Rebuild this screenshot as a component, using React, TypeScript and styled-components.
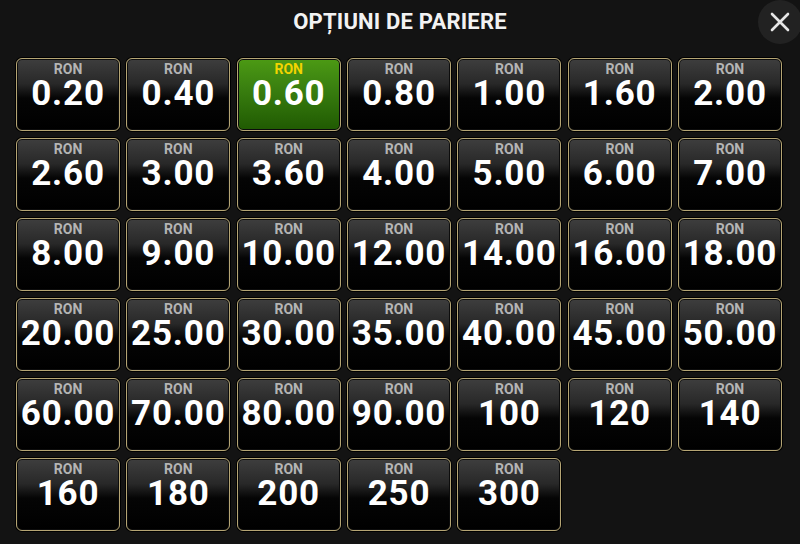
import styled, { createGlobalStyle } from 'styled-components'

const GlobalStyle = createGlobalStyle`
    html, body {
        margin: 0;
        padding: 0;
        background: #131313;
        font-family: Roboto, "Liberation Sans", Arial, sans-serif;
    }
`

const bets = [
    '0.20', '0.40', '0.60', '0.80', '1.00', '1.60', '2.00',
    '2.60', '3.00', '3.60', '4.00', '5.00', '6.00', '7.00',
    '8.00', '9.00', '10.00', '12.00', '14.00', '16.00', '18.00',
    '20.00', '25.00', '30.00', '35.00', '40.00', '45.00', '50.00',
    '60.00', '70.00', '80.00', '90.00', '100', '120', '140',
    '160', '180', '200', '250', '300',
]

const selected = '0.60'

export default function App() {
    return (
        <>
            <GlobalStyle />
            <Screen>
                <Header>
                    <Title>OPȚIUNI DE PARIERE</Title>
                    <Close aria-label="close">
                        <svg width="22" height="22" viewBox="0 0 22 22">
                            <path d="M3 3 L19 19 M19 3 L3 19" stroke="#e6e6e6" strokeWidth="2.6" strokeLinecap="round" />
                        </svg>
                    </Close>
                </Header>
                <Grid>
                    {bets.map((b) => (
                        <Bet key={b} active={b === selected}>
                            <Currency active={b === selected}>RON</Currency>
                            <Amount>{b}</Amount>
                        </Bet>
                    ))}
                </Grid>
            </Screen>
        </>
    )
}

const Screen = styled.div`
    width: 800px;
    height: 544px;
    overflow: hidden;
    background: #131313;
`

const Header = styled.div`
    position: relative;
    height: 58px;
    display: flex;
    justify-content: center;
    align-items: flex-start;
`

const Title = styled.h1`
    margin: 9px 0 0;
    font-size: 22px;
    line-height: 26px;
    font-weight: 700;
    color: #f2f2f2;
    letter-spacing: 0.2px;
`

const Close = styled.button`
    position: absolute;
    top: 0;
    right: -2px;
    width: 44px;
    height: 44px;
    border: none;
    border-radius: 50%;
    background: #222222;
    display: flex;
    align-items: center;
    justify-content: center;
    padding: 0;
`

const Grid = styled.div`
    display: grid;
    grid-template-columns: repeat(7, 1fr);
    grid-auto-rows: 73px;
    column-gap: 6.3px;
    row-gap: 7px;
    width: 766px;
    margin-left: 16px;
`

const Bet = styled.div<{ active?: boolean }>`
    box-sizing: border-box;
    border-radius: 6px;
    border: 1.5px solid #b5a574;
    box-shadow: inset 0 0 0 1px #0c0c0c, 0 0 0 1px #000;
    background: ${({ active }) => active
        ? 'linear-gradient(180deg, #4c9a14 0%, #3a8010 40%, #205a02 100%)'
        : 'linear-gradient(180deg, #3e3e3e 0%, #282828 35%, #050505 55%, #000 100%)'};
    display: flex;
    flex-direction: column;
    align-items: center;
    padding-top: 3px;
`

const Currency = styled.div<{ active?: boolean }>`
    font-size: 14px;
    font-weight: 700;
    line-height: 15px;
    color: ${({ active }) => active ? '#f2d400' : '#b4b4b4'};
`

const Amount = styled.div`
    font-size: 35px;
    font-weight: 700;
    line-height: 40px;
    letter-spacing: 0.8px;
    color: #ffffff;
    margin-top: -3px;
`
